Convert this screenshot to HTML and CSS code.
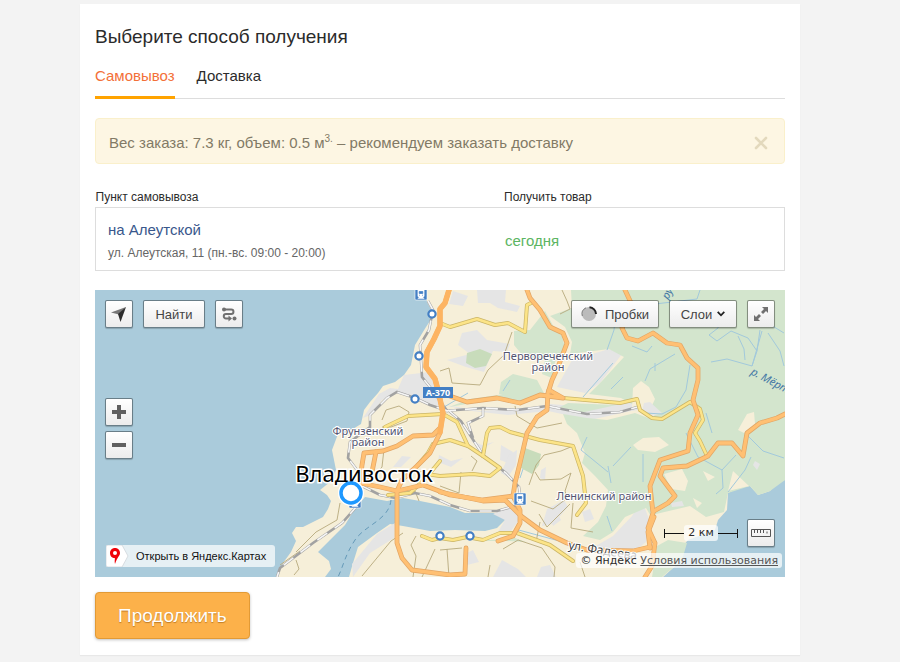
FILE: index.html
```html
<!DOCTYPE html>
<html lang="ru">
<head>
<meta charset="utf-8">
<meta name="viewport" content="width=device-width, initial-scale=1">
<title>Выберите способ получения</title>
<link rel="stylesheet" href="styles.css">
</head>
<body>
<main class="panel">
  <h1 class="title">Выберите способ получения</h1>
  <nav class="tabs">
    <a class="tab tab-active" href="#pickup">Самовывоз</a>
    <a class="tab" href="#delivery">Доставка</a>
  </nav>
  <div class="notice">
    <p class="notice-text">Вес заказа: 7.3 кг, объем: 0.5 м<sup>3.</sup> – рекомендуем заказать доставку</p>
    <button class="notice-close" type="button" aria-label="Закрыть">
      <svg width="14" height="14" viewBox="0 0 14 14"><path d="M2 2 12 12M12 2 2 12" fill="none" stroke="#e3d9bd" stroke-width="2.6" stroke-linecap="round"/></svg>
    </button>
  </div>
  <table class="points">
    <thead>
      <tr><th scope="col">Пункт самовывоза</th><th scope="col">Получить товар</th></tr>
    </thead>
    <tbody>
      <tr>
        <td><a class="point-name" href="#point">на Алеутской</a><div class="point-address">ул. Алеутская, 11 (пн.-вс. 09:00 - 20:00)</div></td>
        <td class="point-date">сегодня</td>
      </tr>
    </tbody>
  </table>

  <section class="map" aria-label="Карта">
    <svg class="map-canvas" viewBox="95 290 690 287" preserveAspectRatio="xMidYMid slice">
      <defs>
        <g id="station"><rect x="-6" y="-6" width="12" height="12" rx="1" fill="#437fc4" stroke="#fff" stroke-width=".6"/><path d="M-3-4.5h6v7h-6zM-3 4.800l1.500-2h3l1.500 2" fill="#fff" stroke="#fff" stroke-width=".8"/><path d="M-1.800-2.500h3.600v2h-3.600zM-2 1.200h1M1 1.200h1" fill="#437fc4" stroke="#437fc4" stroke-width=".7"/></g>
        <g id="stop"><circle r="3.600" fill="#fff" stroke="#437fc4" stroke-width="2.200"/></g>
        <g id="primary">
          <path d="M449 290 445 303 440 309 440 326 434 339 427 352 426 367 435 379 438 390 443 413 440 432"/>
          <path d="M440 428 433 435 413 436 397 446 383 451 364 453 362 465 360 483 380 487 397 491 423 485 450 495 483 500 513 496"/>
          <path d="M376 452 372 472 362 483"/>
          <path d="M527 290 530 298 540 310 550 327 563 333 567 343 558 367 552 380 548 393 547 410 537 417 527 433 520 463 515 483 513 496 520 510 520 523 513 536 498 541"/>
          <path d="M440 492 483 501 505 500 521 516 540 530 567 543 587 550 633 551 650 547"/>
          <path d="M447 395 467 402 497 398 520 403 540 395 563 398M549 390 563 398"/>
          <path d="M625 290 632 305 622 328 627 338 638 341 653 333 667 343 680 345 687 358 698 368 698 380 693 400 698 415 690 433 688 451 660 460 650 486 653 513 648 528 655 543 652 566 645 577"/>
          <path d="M654 511 668 503 675 496 660 476 663 468 687 466 708 456 718 443 732 443 743 456 747 433 760 423 777 418 785 414"/>
          <path d="M654 517 648 532 650 548M440 433 430 453 417 466 402 480 397 491 397 543 402 558 412 570 450 575 465 574 466 548"/>
        </g>
        <g id="secondary">
          <path d="M440 323 450 327 477 319 495 325 508 323 525 332 527 305 533 302"/>
          <path d="M385 427 408 416 443 414 457 422 468 446 483 456 500 468 490 476 473 474 440 476 420 473"/>
          <path d="M417 466 428 453 433 444 450 440 468 446"/>
          <path d="M483 456 487 433 490 428 500 427 510 432 540 440 573 446 583 476 586 503 577 515"/>
          <path d="M563 398 620 403 637 399 640 410 652 418 662 419 690 402 700 409 703 420 695 433 700 441 707 456"/>
          <path d="M422 536 432 540 440 538 453 540 467 537 483 540 500 533 517 533 550 545 573 561"/>
          <path d="M388 495 410 493 425 479 440 461"/>
        </g>
        <g id="railway">
          <path d="M428 301 433 310 429 330 420 345 422 377 430 387 448 412"/>
          <path d="M448 411 430 405 415 398 397 392 387 398 370 415 370 427 350 442 348 458 360 474M360 485 380 495 395 498 415 493 430 496 450 505 470 511 497 511 518 505"/>
          <path d="M358 505 342 523 313 543 280 568 277 577"/>
          <path d="M444 411 483 408 517 410 547 406 587 414 620 412 641 406M448 410 461 421 483 455 506 473 519 487 521 505"/>
          <path d="M483 408 483 416 468 423 473 438"/>
        </g>
      </defs>

      <rect x="-400" y="190" width="1700" height="490" fill="#aacbdb"/>
      <path fill="#f6efd9" d="M424 290 427 302 434 315 426 327 415 345 411 365 404 375 395 382 383 386 378 393 370 402 364 410 361 424 348 432 338 434 332 450 336 470 330 482 320 490 327 495 331 501 328 509 323 517 303 527 296 527 292 533 296 541 291 552 283 563 277 577H325L331 569 329 561 318 552 330 540 345 525 354 510 365 497 387 501 403 498 420 501 450 507 465 513 502 513 505 520 497 528 485 531 455 530 430 531 403 526 390 524 377 533 358 547 353 563 349 577H663L682 560V547L688 540 715 530 718 520 727 510 728 493 738 488 750 486 758 495 770 491 777 482 785 480H1300V190H424z"/>
      <g fill="#e5e5e5">
        <path d="M404 375 430 372 442 390 443 407 427 404 399 392 382 400 371 415 363 418 379 394 390 388 398 389z"/>
        <path d="M477 290 506 290 505 302 520 306 517 312 498 308 490 303 478 303zM453 291 468 296 463 306 449 304zM462 333 477 330 487 340 510 344 507 352 493 351 484 372 466 367 447 360 470 354 458 345z"/>
        <path d="M446 405 480 411 535 407 550 404 590 407 635 402 640 409 590 420 548 411 508 415 463 410zM572 360 609 349 622 354 600 383 585 393 557 387 567 369z"/>
        <path d="M633 388 649 386 656 398 648 407 639 410 626 411zM613 536 632 516 642 501 649 519 646 542 624 560 594 547zM493 514 513 504 519 520 508 535 498 532 505 520z"/>
        <path d="M395 523 377 534 352 564 353 577 370 553 394 538zM439 455 451 461 463 458 451 467 438 462zM501 445 513 452 508 463 500 460zM541 470 546 467 545 480 540 478zM502 560 518 569 526 577H493zM550 515 556 510 561 520 553 526zM463 555 473 550 479 562 467 565zM582 512 590 509 594 519 585 522z"/>
        <path d="M509 455 517 450 516 465 508 477 501 473zM547 509 564 500 568 507 553 524 542 526zM393 467 402 456 411 457 401 467zM470 440 482 445 494 442 481 449zM541 567 550 565 556 577H537z"/>
      </g>
      <g fill="#d3e5cd">
        <path d="M571 290 572 308 550 316 565 327 572 342 570 354 609 349 624 357 602 381 589 394 621 398 650 414 658 411 651 419 635 413 607 420 587 418 563 414 567 424 577 433 585 453 582 463 595 476 608 490 606 506 598 522 583 536 600 540 613 532 625 517 646 508 652 518 656 514 690 506 706 517 724 512 728 493 750 486 758 495 770 491 785 480H1300V190H571z"/>
        <path d="M514 331 530 330 545 311 555 329 562 336 565 348 555 362 552 378 542 374 545 360 523 356 514 345zM501 382 513 374 537 380 544 393 521 399 499 394zM449 407 470 399 518 392 537 397 520 401 490 400zM568 403 616 405 580 413 560 407zM477 541 515 538 526 542 506 541zM668 540 687 543 682 560 662 577H652L657 546z"/>
      </g>
      <g fill="#f6efd9"><path d="M633 388 641 381 649 387 655 399 650 410 632 408zM633 445 643 438 659 437 669 445 655 452 638 450zM664 474 682 469 688 481 685 491 671 489zM703 471 715 477 708 481zM728 491 733 471 749 486zM738 430 747 414 754 412 755 424 744 433zM693 498 702 503 697 508zM677 517 694 512 698 526 684 530zM602 567 632 559 650 561 642 577H600z"/></g>
      <path fill="#c8dcbb" d="M467 353 480 349 492 354 486 366 475 368 466 363zM525 448 541 454 539 465 532 474 521 468z"/>
      <path fill="#e5e5e5" d="M644 403 650 402 662 413 652 416 642 411zM671 503 682 501 684 506 672 507zM755 461 760 464 757 470 753 465z"/>

      <g fill="none" stroke="#a2c9dc" stroke-width="1">
        <path d="M617 303 614 330 607 350M700 290 697 299 655 304M721 313 718 328 709 335 717 341 731 331M731 331 748 338 757 351 752 366 727 359 711 362M738 336 744 349 745 360M757 351 760 330M752 366 762 331M768 333 780 351 784 366M761 319 784 333M632 346 647 352 652 346M690 365 686 390 676 407 662 414 645 413M675 354 650 369 645 381M655 363 655 371M611 389 623 377M643 454V482M613 466 631 447M686 433 698 457 722 470 723 488 716 494M722 470 736 455M728 492 745 470 751 457M745 433 763 451 784 458M706 413 712 433M587 437 581 450 608 472M608 466 611 483M607 516 612 531M468 393 444 407M503 391 510 380M515 529 574 545 602 552M762 308 766 320M613 363 583 397M520 478 523 469"/>
        <path d="M391 500C389 520 365 525 355 540S343 567 338 577" stroke="#6499b8" stroke-dasharray="5 4"/>
      </g>
      <g fill="none" stroke="#b7a97d" stroke-width=".9">
        <path d="M382 420 386 410 399 406 409 412 407 421 391 427 382 427M440 371 449 368 452 383 480 385 488 370 504 355 512 332M562 290 567 301 570 309 560 314M515 406 517 416 537 428 562 423M529 485 536 465 544 455 561 451 573 446M535 472 540 480 561 479 571 473 565 491 568 500M566 499 553 509 531 501M539 514 547 527 570 504M573 503 571 528 593 532M471 456 477 461 472 471M440 486 459 493 461 472M440 550 462 548M503 549 518 540 542 548 555 567 554 577M340 503 337 520 316 532 296 552M384 449 382 467 366 485M362 576 391 541 403 533M413 577 416 556 411 545 416 536M422 577 435 549M488 577 490 565M585 577 580 562M280 565 300 551M296 560 299 569 294 575M447 549 449 577M540 522 536 542M419 501 415 491 397 491"/>
      </g>
      <g fill="none">
        <use href="#railway" stroke="#a2a2a2" stroke-width="2.600"/>
        <use href="#railway" stroke="#f6f6f6" stroke-width="1.600" stroke-dasharray="12 9"/>
      </g>
      <g fill="none" stroke-linejoin="round" stroke-linecap="round">
        <use href="#secondary" stroke="#cbb566" stroke-width="4"/>
        <use href="#secondary" stroke="#fce488" stroke-width="2.600"/>
        <use href="#primary" stroke="#e2a565" stroke-width="4.800"/>
        <use href="#primary" stroke="#ffc073" stroke-width="3.400"/>
        <path d="M449 290 445 303 440 309 440 326 434 339 427 352 426 367 435 379 438 390 443 413 440 432" stroke="#fdb462" stroke-width="5.500"/>
      </g>

      <use href="#station" x="421" y="294"/>
      <use href="#station" x="520" y="499"/>
      <use href="#station" x="355" y="502"/>
      <use href="#stop" x="432" y="314"/>
      <use href="#stop" x="419" y="356"/>
      <use href="#stop" x="415" y="399"/>
      <use href="#stop" x="440" y="536"/>
      <use href="#stop" x="470" y="536"/>
      <rect x="423" y="387" width="30" height="11" fill="#437fc4"/>
      <text class="map-road-number" x="438" y="396">А-370</text>
      <g class="map-district">
        <text x="548" y="360">Первореченский</text>
        <text x="548" y="371">район</text>
        <text x="368" y="435">Фрунзенский</text>
        <text x="368" y="446">район</text>
        <text x="604" y="500">Ленинский район</text>
      </g>
      <text class="map-street" transform="translate(568 549) rotate(9)">ул. Фадеева</text>
      <text class="map-river" transform="translate(750 374) rotate(28)">р. Мёртвая</text>
      <text class="map-river" transform="translate(668 300) rotate(-62)">ру</text>
      <circle cx="351" cy="493" r="10" fill="#fff" stroke="#fff" stroke-width="6"/>
      <text class="map-city" x="364" y="482">Владивосток</text>
      <circle cx="351" cy="493" r="10" fill="#fff" stroke="#1e98ff" stroke-width="3.500"/>
    </svg>

    <div class="map-toolbar">
      <button class="map-button map-button-icon" type="button" aria-label="Моё местоположение">
        <svg width="16" height="16" viewBox="0 0 16 16"><path d="M15 1 0 6.500 8 8.500z" fill="#777"/><path d="M15 1 7 8 9.500 16z" fill="#2c2c2c"/></svg>
      </button>
      <button class="map-button map-button-find" type="button">Найти</button>
      <button class="map-button map-button-icon" type="button" aria-label="Маршруты">
        <svg width="16" height="16" viewBox="0 0 16 16"><path d="M3 3.500h7.200a2.200 2.200 0 0 1 0 4.500H5a2.200 2.200 0 0 0 0 4.500h4" fill="none" stroke="#707070" stroke-width="2"/><path d="M7.500 9.500 11 12.500 7.500 15.500z" fill="#707070"/><circle cx="3" cy="3.500" r="2" fill="#707070"/><circle cx="13.500" cy="12.500" r="2" fill="#707070"/></svg>
      </button>
      <span class="map-toolbar-space"></span>
      <button class="map-button map-button-traffic" type="button">
        <svg width="16" height="16" viewBox="0 0 16 16"><circle cx="8" cy="8" r="7" fill="#bbb"/><path d="M8.500 1.200A7 7 0 0 1 15 8" fill="none" stroke="#222" stroke-width="2"/><path d="M1.300 10A7 7 0 0 1 5 1.800" fill="none" stroke="#777" stroke-width="1"/></svg>
        Пробки
      </button>
      <button class="map-button map-button-layers" type="button">Слои
        <svg width="8" height="6" viewBox="0 0 8 6"><path d="M.7.900 4 4.300 7.300.900" fill="none" stroke="#222" stroke-width="1.800"/></svg>
      </button>
      <button class="map-button map-button-icon" type="button" aria-label="На весь экран">
        <svg width="16" height="16" viewBox="0 0 16 16"><path d="M9 1h6v6l-2-2-3 3-2-2 3-3zM7 15H1V9l2 2 3-3 2 2-3 3z" fill="#707070"/></svg>
      </button>
    </div>
    <div class="map-zoom">
      <button class="map-button map-button-icon" type="button" aria-label="Приблизить"><svg width="14" height="14" viewBox="0 0 14 14"><path d="M0 7h14M7 0v14" stroke="#606060" stroke-width="4"/></svg></button>
      <button class="map-button map-button-icon" type="button" aria-label="Отдалить"><svg width="14" height="14" viewBox="0 0 14 14"><path d="M0 7h14" stroke="#606060" stroke-width="4"/></svg></button>
    </div>
    <a class="map-open" href="#maps">
      <svg width="24" height="22" viewBox="0 0 24 22"><path d="M2 0h14l6 11-6 11H2a2 2 0 0 1-2-2V2a2 2 0 0 1 2-2z" fill="#fff" stroke="#d0d6da" stroke-width=".8"/><path fill="#f00008" fill-rule="evenodd" d="M9 3c3 0 5 2.200 5 5 0 3-2.500 3.500-5 11-.7-2.500 0-4.500-.2-6C6 13 4 11 4 8c0-2.800 2-5 5-5zm0 3a2 2 0 1 0 0 4 2 2 0 0 0 0-4z"/></svg>
      <span>Открыть в Яндекс.Картах</span>
    </a>
    <div class="map-scale">
      <span class="map-scale-line map-scale-left"></span>
      <span class="map-scale-label">2 км</span>
      <span class="map-scale-line map-scale-right"></span>
      <button class="map-button map-button-icon" type="button" aria-label="Измерить расстояние"><svg width="20" height="8" viewBox="0 0 20 8"><path d="M.5.500h19v7H.5zM3.500 1v3M6.500 1v3M9.500 1v3M12.500 1v3M16 2.500v2" fill="none" stroke="#555"/></svg></button>
    </div>
    <div class="map-copyright">© Яндекс <a href="#terms">Условия использования</a></div>
  </section>
  <button class="continue" type="button">Продолжить</button>
</main>
</body>
</html>
```
FILE: styles.css
```css
* {
  box-sizing: border-box;
}

body {
  margin: 0;
  padding: 4px 20px 4px 0;
  background: #f3f3f3;
  color: #2b2b2b;
  font-family: "Liberation Sans", Arial, sans-serif;
  font-size: 15px;
  line-height: 20px;
}

button {
  font-family: inherit;
  cursor: pointer;
}

a {
  color: inherit;
  text-decoration: none;
}

.panel {
  max-width: 720px;
  margin: 0 auto;
  padding: 21px 15px 16px;
  background: #fff;
  box-shadow: 0 1px 1px #e8e8e8;
}

.title {
  margin: 0;
  font-size: 19px;
  font-weight: 400;
  line-height: 24px;
}

.tabs {
  display: flex;
  gap: 22px;
  margin-top: 13px;
  border-bottom: 1px solid #ddd;
}

.tab {
  height: 36px;
  margin-bottom: -1px;
  padding-top: 4px;
}

.tab-active {
  height: 37px;
  border-bottom: 3px solid #ffa300;
  color: #f37038;
}

.notice {
  display: flex;
  align-items: center;
  justify-content: space-between;
  height: 46px;
  margin-top: 19px;
  padding: 3px 16px 0 13px;
  border: 1px solid #faf0cb;
  border-radius: 4px;
  background: #fdf6e3;
  color: #827a66;
}

.notice-text {
  margin: 0;
}

.notice-text sup {
  font-size: 10px;
  line-height: 0;
}

.notice-close {
  display: flex;
  padding: 0;
  border: 0;
  background: none;
}

.points {
  width: 100%;
  margin-top: 24px;
  border-collapse: collapse;
  text-align: left;
}

.points th {
  width: 41%;
  padding: 0 0 1px 2px;
  font-size: 12px;
  font-weight: 400;
  line-height: 18px;
}

.points th:first-child {
  width: 59%;
  padding-left: 0;
}

.points tbody {
  border: 1px solid #ddd;
}

.points td {
  height: 63px;
  padding: 4px 0 0 12px;
  vertical-align: middle;
}

.points .point-date {
  padding-left: 3px;
  color: #5cb562;
}

.point-name {
  color: #39578c;
}

.point-address {
  padding-top: 3px;
  color: #666;
  font-size: 12px;
}

.map {
  position: relative;
  height: 287px;
  margin-top: 19px;
  overflow: hidden;
}

.map-canvas {
  display: block;
  width: 100%;
  height: 100%;
  font-family: "Noto Sans", "Open Sans", sans-serif;
}

.map-district {
  fill: #555570;
  stroke: #fff;
  stroke-width: 2px;
  paint-order: stroke;
  font-size: 11px;
  text-anchor: middle;
}

.map-road-number {
  fill: #fff;
  font-size: 9px;
  font-weight: 700;
  text-anchor: middle;
}

.map-street {
  fill: #444;
  stroke: #fff;
  stroke-width: 2px;
  paint-order: stroke;
  font-size: 12px;
}

.map-river {
  fill: #4478a5;
  font-size: 11px;
  font-style: italic;
}

.map-city {
  fill: #000;
  stroke: #fff;
  stroke-width: 3px;
  paint-order: stroke;
  font-size: 22px;
  text-anchor: middle;
}

.map-toolbar {
  position: absolute;
  top: 10px;
  right: 10px;
  left: 10px;
  display: flex;
  gap: 10px;
}

.map-toolbar-space {
  flex: 1;
}

.map-button {
  display: flex;
  align-items: center;
  justify-content: center;
  height: 28px;
  padding: 0;
  border: 1px solid rgba(0, 0, 0, 0.38);
  border-radius: 2px;
  background: linear-gradient(#fff, #ececec);
  background-clip: padding-box;
  color: #444;
  font-size: 13px;
  box-shadow: 0 1px 1px rgba(0, 0, 0, 0.2);
}

.map-button-icon {
  width: 28px;
}

.map-button-find {
  width: 62px;
}

.map-button-traffic {
  gap: 8px;
  width: 88px;
}

.map-button-layers {
  gap: 5px;
  width: 68px;
}

.map-zoom {
  position: absolute;
  top: 108px;
  left: 10px;
  display: grid;
  gap: 5px;
}

.map-open {
  position: absolute;
  bottom: 10px;
  left: 11px;
  display: flex;
  align-items: center;
  gap: 6px;
  height: 22px;
  padding-right: 9px;
  border-radius: 3px;
  background: rgba(255, 255, 255, 0.7);
  color: #111;
  font-size: 11px;
}

.map-scale {
  position: absolute;
  right: 10px;
  bottom: 30px;
  display: flex;
  align-items: center;
  font-family: "DejaVu Sans", sans-serif;
  font-size: 11px;
}

.map-scale-line {
  width: 20px;
  height: 9px;
  background: linear-gradient(#111, #111) center / 100% 1px no-repeat;
}

.map-scale-left {
  border-left: 1px solid #111;
}

.map-scale-right {
  margin-right: 9px;
  border-right: 1px solid #111;
}

.map-scale-label {
  width: 34px;
  border-radius: 3px;
  background: rgba(255, 255, 255, 0.7);
  line-height: 16px;
  text-align: center;
}

.map-copyright {
  position: absolute;
  right: 3px;
  bottom: 9px;
  padding: 0 4px;
  border-radius: 3px;
  background: rgba(255, 255, 255, 0.7);
  font-family: "DejaVu Sans", sans-serif;
  font-size: 11px;
  line-height: 15px;
}

.map-copyright a {
  color: #555;
  text-decoration: underline;
}

.continue {
  display: block;
  height: 47px;
  margin-top: 15px;
  padding: 0 22px;
  border: 1px solid #e29a35;
  border-radius: 4px;
  background: #fcb14a;
  color: #fff;
  font-size: 19px;
  text-shadow: 0 1px 1px rgba(130, 70, 0, 0.5);
  box-shadow: 0 1px 3px rgba(0, 0, 0, 0.25);
}
```
